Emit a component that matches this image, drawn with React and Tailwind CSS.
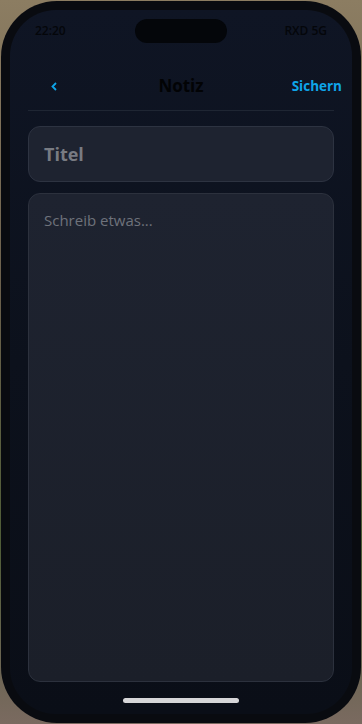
export default function App() {
  return (
    <div
      className="w-[362px] h-[724px] overflow-hidden bg-[linear-gradient(180deg,#8c7d62_0%,#6b604c_40%,#4f5c36_75%,#7a6a60_100%)]"
      style={{ fontFamily: '"Open Sans", "Noto Sans", "Liberation Sans", sans-serif' }}
    >
      <div className="mx-[1px] mt-[1px] h-[722px] rounded-[56px] bg-[#090b10] p-[9px]">
        <div className="flex h-[704px] flex-col overflow-hidden rounded-[46px] bg-[linear-gradient(180deg,#0f1524_0%,#0c111c_50%,#0a0e17_100%)]">
          {/* status bar */}
          <div className="mt-[9px] grid h-[24px] grid-cols-[1fr_auto_1fr] items-center px-[25px]">
            <span className="text-[12px] font-semibold text-[#04060a]">22:20</span>
            <div className="h-[24px] w-[92px] rounded-full bg-[#04060a]" />
            <span className="justify-self-end text-[12px] font-semibold text-[#04060a]">RXD 5G</span>
          </div>
          {/* header */}
          <div className="mt-[19px] grid h-[48px] grid-cols-[1fr_auto_1fr] items-center px-[10px]">
            <svg width="6" height="9" viewBox="0 0 6 9" className="ml-[31px]">
              <polyline points="5,1 1.5,4.5 5,8" fill="none" stroke="#0ea5e9" strokeWidth="1.8" />
            </svg>
            <span className="text-[17px] font-bold text-[#020305]">Notiz</span>
            <span className="justify-self-end text-[13.5px] font-bold text-[#0ea5e9]">Sichern</span>
          </div>
          <div className="mx-[18px] h-px bg-[#1f2633]" />
          {/* title card */}
          <div className="mx-[18px] mt-[15px] flex h-[56px] items-center rounded-[12px] border border-[#2d3341] bg-[#1e2330] pl-[15px]">
            <span className="text-[18px] font-bold text-[#787b82]">Titel</span>
          </div>
          {/* body card */}
          <div className="mx-[18px] mt-[11px] h-[489px] rounded-[12px] border border-[#2c313d] bg-[linear-gradient(180deg,#1e2330_0%,#1b1f29_100%)] pl-[15px] pt-[14px]">
            <span className="text-[15px] leading-[20px] text-[#6e727b]">Schreib etwas...</span>
          </div>
          {/* home indicator */}
          <div className="mt-[16px] flex justify-center">
            <div className="h-[5px] w-[116px] rounded-full bg-[#d6d6d8]" />
          </div>
        </div>
      </div>
    </div>
  );
}
